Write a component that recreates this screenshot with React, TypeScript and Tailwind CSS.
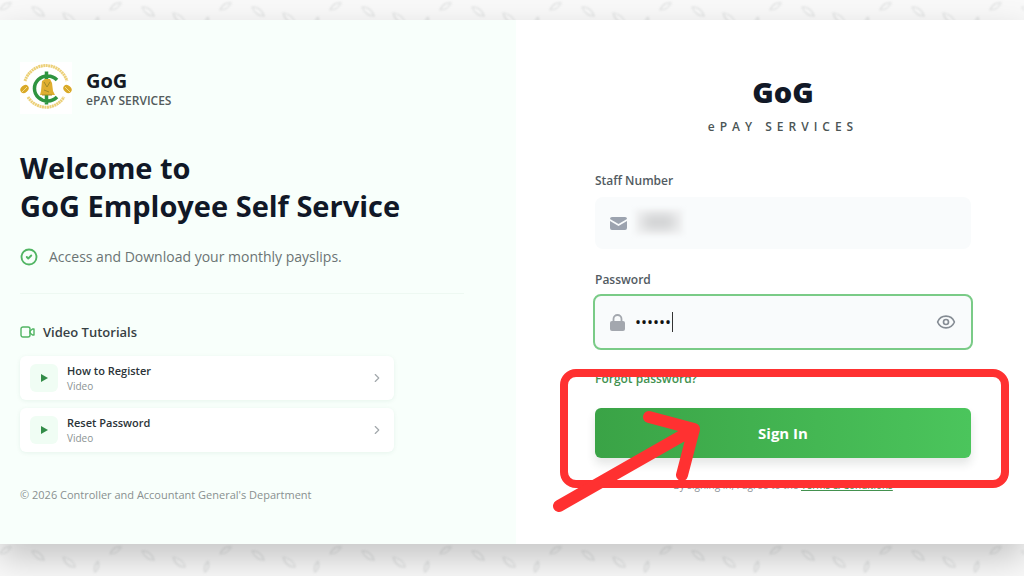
import React from "react";
import { ChevronRight, CircleCheck, Eye } from "lucide-react";

const TUTORIALS = ["How to Register", "Reset Password"];

const Texture = () => (
  <svg className="absolute inset-0 h-full w-full blur-[1px]" aria-hidden="true">
    <defs>
      <pattern id="leaves" width="110" height="32" patternUnits="userSpaceOnUse">
        <g fill="none" strokeLinecap="round">
          <g stroke="#ffffff" strokeWidth="2" opacity="0.7">
            <path d="M32 9q7 1 10 7M63 13q7 4 10 9M98 16q-3 5-2 9M111 11q5-7 10-7M1 11q5-7 10-7" />
          </g>
          <g stroke="#858b8b" strokeWidth="1.200" opacity="0.25">
            <path d="M32 7q9 0 12 9q-8 0-12-9M63 13q3 10 12 10q-2-8-12-10M98 17q-5 6-3 11q5-4 3-11M110 10q4-8 11-7q-4 7-11 7M0 10q4-8 11-7q-4 7-11 7" />
          </g>
        </g>
      </pattern>
    </defs>
    <rect width="100%" height="100%" fill="url(#leaves)" />
  </svg>
);

const Logo = () => (
  <svg viewBox="0 0 52 52" className="size-[52px] bg-white" role="img" aria-label="Controller and Accountant General">
    <g fill="none" stroke="#ecd078" strokeWidth="3" strokeDasharray="2 0.5">
      <path d="M5 19A22 22 0 0 1 47 19" />
      <path d="M8 35A21 21 0 0 0 44 35" />
    </g>
    <g fill="#d9a928">
      <ellipse cx="4.500" cy="27" rx="4.500" ry="3.500" transform="rotate(-40 4.500 27)" />
      <ellipse cx="47.500" cy="27" rx="4.500" ry="3.500" transform="rotate(40 47.500 27)" />
    </g>
    <path d="M2 30l5-5M45 25l5 5" stroke="#f4dc8c" strokeWidth="1" />
    <path d="M37 18A13 12.500 0 1 0 37 35M26.500 9.500v33" fill="none" stroke="#2f9440" strokeWidth="3.500" />
    <path d="M22 19l3-2h5l2 4 1 8 2 4H20l1-4z" fill="#dfae30" />
    <path d="M24 20l3 5 3-5M24 28l5 2M22 33h10" fill="none" stroke="#a08a28" strokeWidth="1" />
  </svg>
);

const Annotation = () => (
  <svg
    className="pointer-events-none absolute -left-11 -top-2.5 h-40 w-[466px] overflow-visible"
    viewBox="0 0 466 160"
    fill="none"
    stroke="#ff3131"
    strokeLinecap="round"
    strokeLinejoin="round"
    aria-hidden="true"
  >
    <rect x="13" y="14" width="441" height="111" rx="12" strokeWidth="8" />
    <path d="M8 147L143 70M98 58l45 12-12 46" strokeWidth="12" />
  </svg>
);

const LeftPanel = () => {
  return (
    <section className="flex w-[516px] flex-col bg-[#f8fffb] px-5 pt-[42px]">
      <div className="flex items-center gap-[14px]">
        <Logo />
        <div className="pt-0.5">
          <p className="text-xl font-bold leading-6 text-[#151b24]">GoG</p>
          <p className="text-xs font-semibold leading-4 text-[#535c5c]">ePAY SERVICES</p>
        </div>
      </div>

      <h1 className="mt-[35px] text-[29px] font-bold leading-[38px] text-[#111827]">
        Welcome to
        <br />
        GoG Employee Self Service
      </h1>

      <p className="mt-[22px] flex items-center gap-[11px] text-sm leading-5 text-[#6b7474]">
        <CircleCheck size={18} strokeWidth={2.5} className="text-[#51b563]" />
        Access and Download your monthly payslips.
      </p>

      <hr className="mr-8 mt-[26px] border-[#eef9f2]" />

      <h2 className="mt-7 flex items-center gap-2 text-[13px] font-semibold leading-5 text-[#374144]">
        <svg width="15" height="12" viewBox="0 0 15 12" fill="none" stroke="#51b563" strokeWidth="1.400" strokeLinejoin="round" aria-hidden="true">
          <rect x="1" y="1" width="9" height="10" rx="2" />
          <path d="M10 5l2.500-2H14v6h-1.500L10 7z" />
        </svg>
        Video Tutorials
      </h2>

      <div className="mr-[102px] mt-[14px] flex flex-col gap-2">
        {TUTORIALS.map((title) => (
          <a
            key={title}
            href="#"
            className="flex h-11 items-center gap-[9px] rounded-md bg-white px-[10px] shadow-[0_1px_4px_rgba(20,120,60,0.08)]"
          >
            <span className="flex size-7 items-center justify-center rounded-md bg-[#f0fdf4]">
              <svg width="7" height="8" viewBox="0 0 7 8" aria-hidden="true">
                <path d="M0 0l7 4-7 4z" fill="#328c48" />
              </svg>
            </span>
            <span className="flex flex-1 flex-col">
              <span className="text-[11px] font-semibold leading-4 text-[#2b3338]">{title}</span>
              <span className="text-[10px] leading-[14px] text-[#8b9393]">Video</span>
            </span>
            <ChevronRight size={14} className="text-[#a2a8ac]" />
          </a>
        ))}
      </div>

      <p className="mt-[35px] text-[11px] leading-4 text-[#899090]">
        © 2026 Controller and Accountant General's Department
      </p>
    </section>
  );
};

const SignInForm = () => {
  return (
    <section className="flex-1 bg-white pl-[79px] pr-[53px] pt-14">
      <div className="text-center">
        <p className="text-[29px] font-extrabold leading-8 text-[#111827]">GoG</p>
        <p className="mt-[11px] text-xs font-semibold leading-4 tracking-[5px] text-[#4b5555]">ePAY SERVICES</p>
      </div>

      <form onSubmit={(e) => e.preventDefault()}>
        <label htmlFor="staff" className="mt-9 block text-xs font-semibold leading-5 text-[#525b62]">
          Staff Number
        </label>
        <div className="relative mt-[6px] flex h-[52px] items-center gap-3 rounded-lg bg-[#f9fbfc] pl-[15px] pr-4">
          <svg width="17" height="13" viewBox="0 0 17 13" fill="#9ca3af" aria-hidden="true">
            <path d="M0 2Q0 0 2 0h13q2 0 2 2L8.500 7z" />
            <path d="M0 4l8.500 5L17 4v7q0 2-2 2H2q-2 0-2-2z" />
          </svg>
          <input id="staff" type="text" className="min-w-0 flex-1 bg-transparent text-sm outline-none" />
          <span className="pointer-events-none absolute left-10 top-3 h-[26px] w-12 overflow-hidden bg-[#f3f4f5] blur-[2px]">
            <span className="mx-auto mt-1.5 block h-3.5 w-9 rounded-full bg-[#cbcccd] blur-[6px]" />
          </span>
        </div>

        <label htmlFor="password" className="mt-[21px] block text-xs font-semibold leading-5 text-[#525b62]">
          Password
        </label>
        <div className="relative -mx-0.5 mt-1 flex h-14 items-center gap-[10px] rounded-lg border-2 border-[#7acb87] bg-[#f9fbfc] px-[15px]">
          <svg width="15" height="17" viewBox="0 0 15 17" aria-hidden="true">
            <path d="M3.500 8V5a4 4 0 0 1 8 0v3" fill="none" stroke="#a3a7ae" strokeWidth="1.800" />
            <rect y="7" width="15" height="10" rx="2" fill="#a3a7ae" />
          </svg>
          <input
            id="password"
            type="password"
            defaultValue="abc123"
            className="min-w-0 flex-1 bg-transparent text-base text-[#111111] outline-none"
          />
          <span className="pointer-events-none absolute left-[77px] top-4 h-5 w-px bg-[#333333]" />
          <button type="button" aria-label="Show password" className="text-[#858c94]">
            <Eye size={20} />
          </button>
        </div>

        <div className="relative mt-[19px]">
          <a href="#" className="block w-fit text-xs font-semibold leading-5 text-[#43914f]">
            Forgot password?
          </a>
          <button
            type="submit"
            className="mt-[19px] h-[50px] w-full rounded-md bg-linear-to-r from-[#3aa346] to-[#4bc55c] text-[15px] font-bold text-white shadow-[0_6px_10px_rgba(30,50,40,0.12)]"
          >
            Sign In
          </button>
          <p className="mt-[19px] text-center text-[10px] leading-4 text-[#8b9096]">
            By signing in, I agree to the{" "}
            <a href="#" className="font-medium text-[#43914f] underline">
              Terms &amp; Conditions
            </a>
          </p>
          <Annotation />
        </div>
      </form>
    </section>
  );
};

const App = () => {
  return (
    <div className="relative min-h-screen overflow-hidden bg-[#f9f9f9] py-5 font-['Open_Sans','Noto_Sans',sans-serif]">
      <Texture />
      <main className="relative flex min-h-[524px] shadow-[0_14px_32px_rgba(0,0,0,0.21)]">
        <LeftPanel />
        <SignInForm />
      </main>
    </div>
  );
};

export default App;
